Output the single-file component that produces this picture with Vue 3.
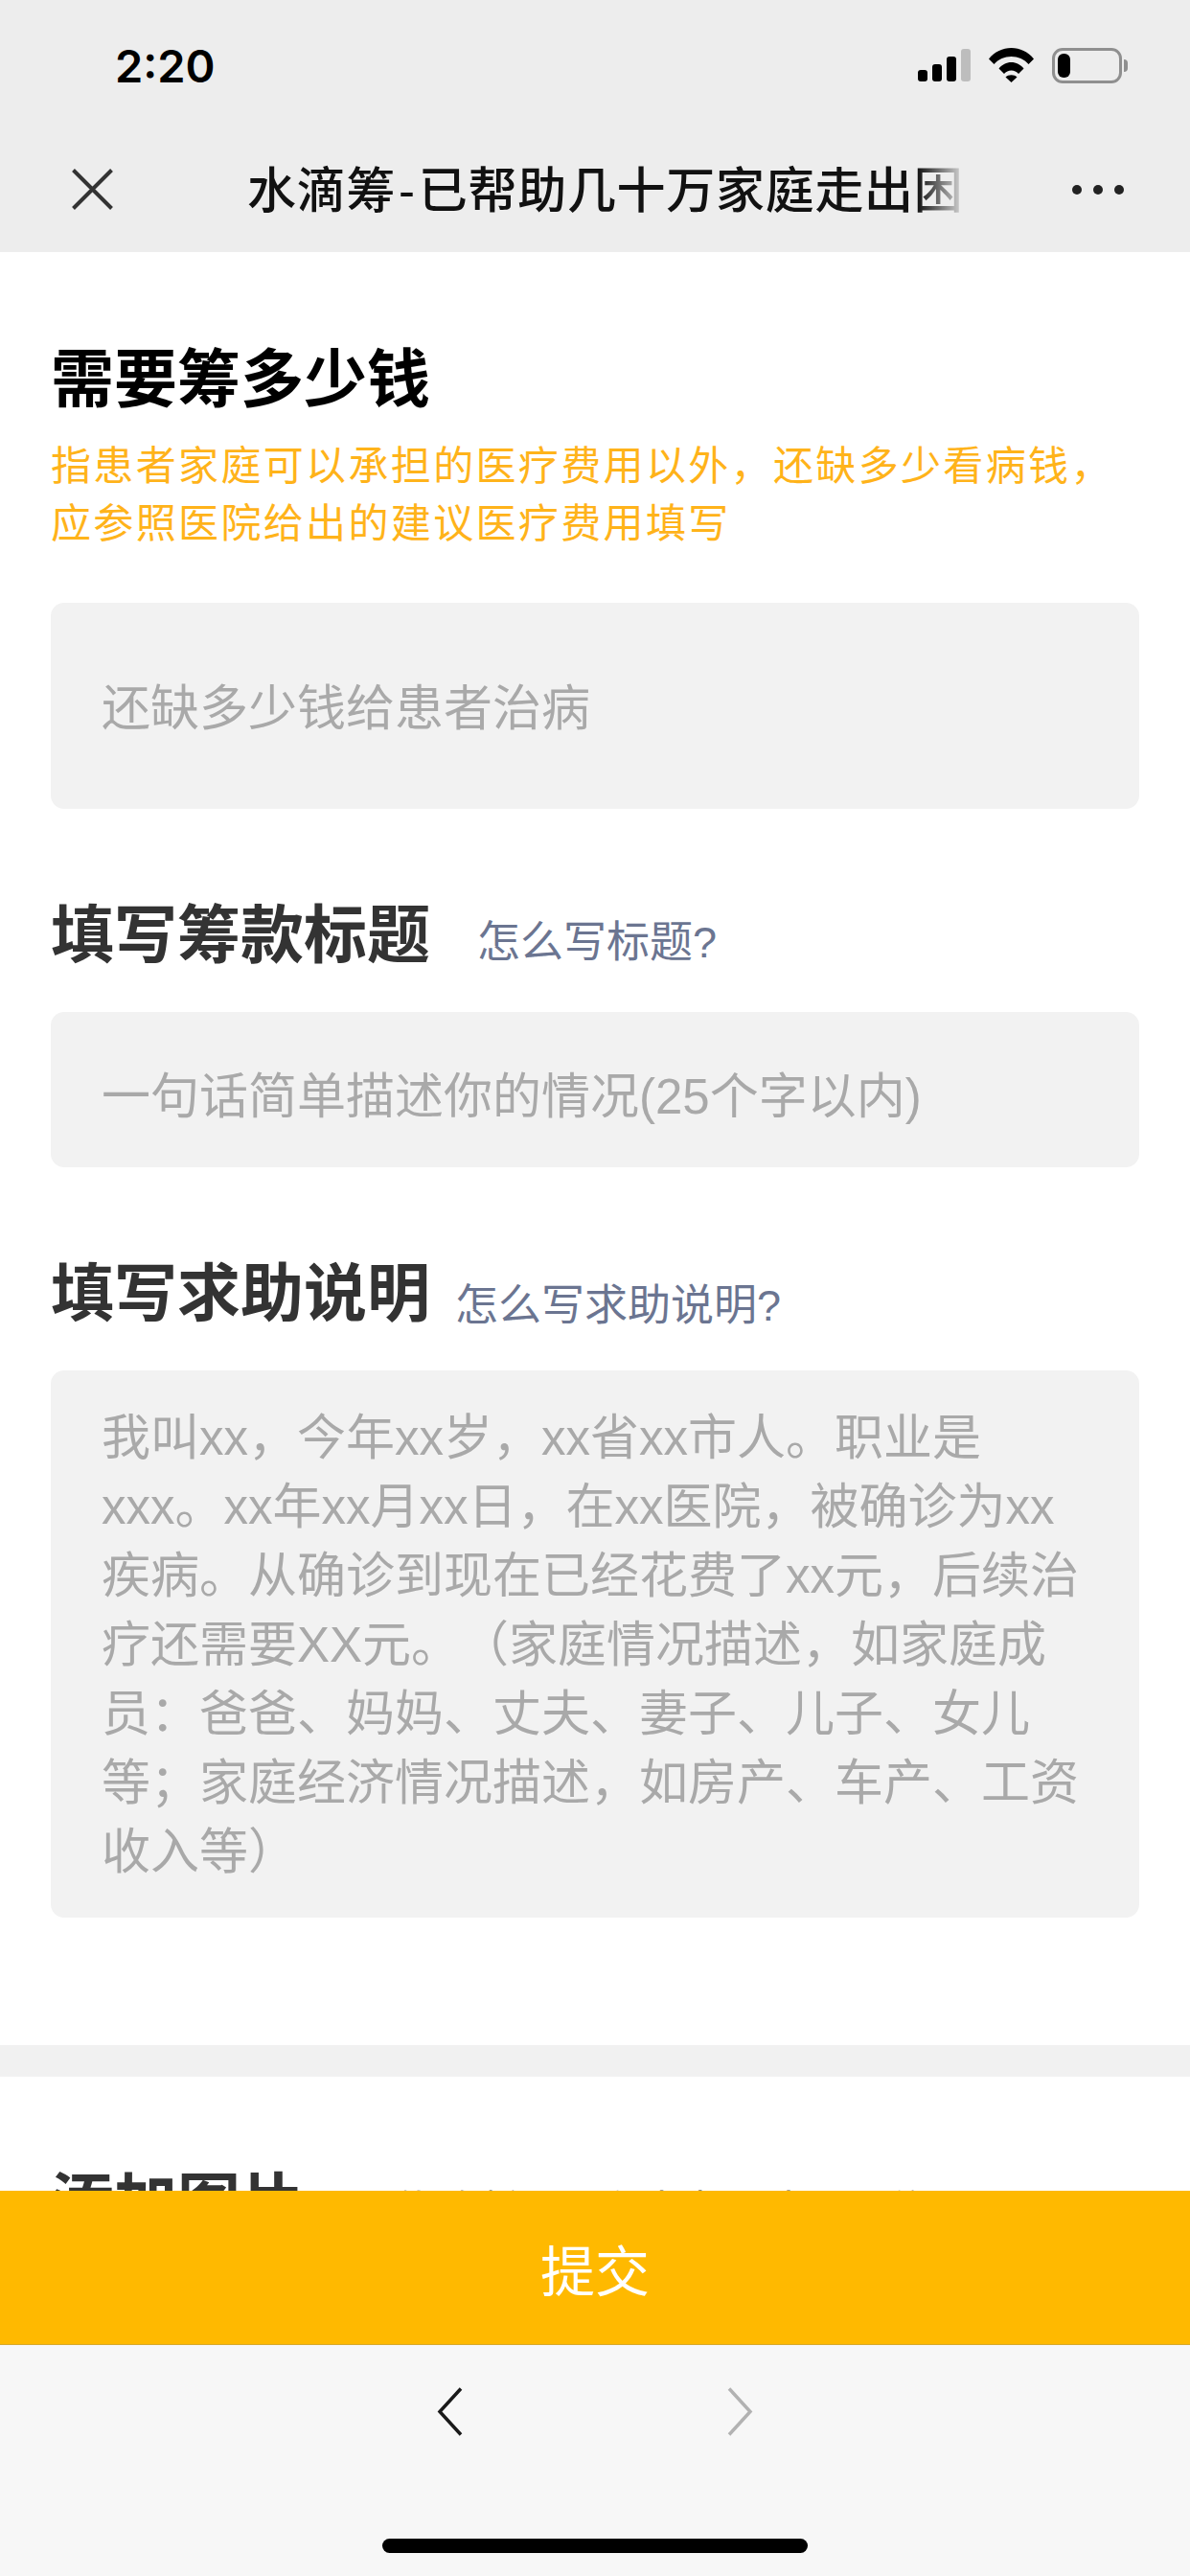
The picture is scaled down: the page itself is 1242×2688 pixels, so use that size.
<script setup>
const helpLines = [
  "我叫xx，今年xx岁，xx省xx市人。职业是",
  "xxx。xx年xx月xx日，在xx医院，被确诊为xx",
  "疾病。从确诊到现在已经花费了xx元，后续治",
  "疗还需要XX元。（家庭情况描述，如家庭成",
  "员：爸爸、妈妈、丈夫、妻子、儿子、女儿",
  "等；家庭经济情况描述，如房产、车产、工资",
  "收入等）",
];
</script>

<template>
  <div class="page">
    <header class="top">
      <div class="status">
        <span class="time">2:20</span>
        <div class="status-icons">
          <div class="signal">
            <i class="bar b1"></i>
            <i class="bar b2"></i>
            <i class="bar b3"></i>
            <i class="bar b4"></i>
          </div>
          <svg class="wifi" width="47" height="36" viewBox="0 0 47 36">
            <path d="M0 11.500C6 4 14.500 0 23.500 0S41 4 47 11.500L41.500 17C37 11.800 30.500 9 23.500 9S10 11.800 5.500 17Z" />
            <path d="M10.500 21.500C13.800 17.500 18.500 15 23.500 15S33.200 17.500 36.500 21.500L31 27C29 24.700 26.500 23.500 23.500 23.500S18 24.700 16 27Z" />
            <path d="M17.500 30.500C19 29 21 28.200 23.500 28.200S28 29 29.500 30.500L23.500 36Z" />
          </svg>
          <div class="battery">
            <div class="battery-body"><i class="battery-level"></i></div>
            <i class="battery-nub"></i>
          </div>
        </div>
      </div>
      <nav class="nav">
        <svg class="close" width="43" height="43" viewBox="0 0 43 43">
          <path d="M1.500 1.500L41.500 41.500M41.500 1.500L1.500 41.500" />
        </svg>
        <div class="nav-title">水滴筹<span class="nav-dash">-</span>已帮助几十万家庭走出困</div>
        <div class="dots"><i></i><i></i><i></i></div>
      </nav>
    </header>

    <main class="content">
      <section class="form">
        <h2 class="heading heading-first">需要筹多少钱</h2>
        <p class="hint">指患者家庭可以承担的医疗费用以外，还缺多少看病钱，<br />应参照医院给出的建议医疗费用填写</p>
        <div class="field field-amount">还缺多少钱给患者治病</div>

        <div class="heading-row">
          <h2 class="heading">填写筹款标题</h2>
          <a class="link link-title">怎么写标题?</a>
        </div>
        <div class="field field-title">一句话简单描述你的情况(25个字以内)</div>

        <div class="heading-row">
          <h2 class="heading">填写求助说明</h2>
          <a class="link link-help">怎么写求助说明?</a>
        </div>
        <div class="field field-help">
          <div v-for="line in helpLines" :key="line">{{ line }}</div>
        </div>
      </section>

      <div class="divider"></div>

      <section class="form">
        <div class="heading-row">
          <h2 class="heading">添加图片</h2>
          <span class="photo-note">上传诊断证明和患者照片更可信</span>
        </div>
      </section>
    </main>

    <button type="button" class="submit">提交</button>

    <footer class="toolbar">
      <div class="arrows">
        <svg width="27" height="51" viewBox="0 0 27 51">
          <path class="arrow-back" d="M25 1.500L3 25.500L25 49.500" />
        </svg>
        <svg width="27" height="51" viewBox="0 0 27 51">
          <path class="arrow-next" d="M2 1.500L24 25.500L2 49.500" />
        </svg>
      </div>
      <div class="home-bar"></div>
    </footer>
  </div>
</template>

<style>
html,
body {
  margin: 0;
  background: #fff;
}
</style>

<style scoped>
.page {
  width: 1242px;
  height: 2688px;
  display: flex;
  flex-direction: column;
  overflow: hidden;
  background: #fff;
  font-family: "Liberation Sans", "Noto Sans CJK SC", sans-serif;
  text-spacing-trim: space-all;
}

/* ---- status + nav ---- */

.top {
  flex-shrink: 0;
  height: 263px;
  background: #ededed;
}

.status {
  height: 136px;
  display: flex;
  align-items: center;
  justify-content: space-between;
  padding: 0 65px 0 120px;
}

.time {
  font-family: Inter, sans-serif;
  font-size: 47px;
  font-weight: 600;
  color: #000;
}

.status-icons {
  display: flex;
  align-items: center;
}

.signal {
  display: flex;
  align-items: flex-end;
  gap: 5px;
  height: 34px;
}

.bar {
  width: 10px;
  border-radius: 3px;
  background: #000;
}

.b1 { height: 12px; }
.b2 { height: 18px; }
.b3 { height: 26px; }
.b4 { height: 34px; background: #bdbdbd; }

.wifi {
  margin-left: 19px;
  fill: #000;
}

.battery {
  display: flex;
  align-items: center;
  margin-left: 19px;
}

.battery-body {
  box-sizing: border-box;
  width: 73px;
  height: 37px;
  padding: 3px;
  border: 3px solid #8f8f8f;
  border-radius: 11px;
}

.battery-level {
  display: block;
  width: 13px;
  height: 25px;
  border-radius: 6px;
  background: #000;
}

.battery-nub {
  width: 4px;
  height: 13px;
  margin-left: 2px;
  border-radius: 0 4px 4px 0;
  background: #8f8f8f;
}

.nav {
  height: 127px;
  display: flex;
  align-items: center;
  padding: 0 69px 0 75px;
}

.close {
  flex-shrink: 0;
  margin-bottom: 4px;
  fill: none;
  stroke: #333;
  stroke-width: 4;
}

.nav-title {
  width: 752px;
  margin-left: 140px;
  overflow: hidden;
  white-space: nowrap;
  font-size: 51px;
  font-weight: 500;
  line-height: 70px;
  letter-spacing: 0.7px;
  color: #111;
  -webkit-mask-image: linear-gradient(to right, #000 93%, transparent 100%);
  mask-image: linear-gradient(to right, #000 93%, transparent 100%);
}

.nav-dash {
  margin: 0 3px;
}

.dots {
  display: flex;
  gap: 12px;
  margin-left: auto;
  margin-bottom: 4px;
}

.dots i {
  width: 10px;
  height: 10px;
  border-radius: 50%;
  background: #222;
}

/* ---- form ---- */

.content {
  flex: 1;
  min-height: 0;
  overflow: hidden;
}

.form {
  padding: 0 53px;
}

.heading {
  margin: 0;
  font-size: 66px;
  font-weight: 700;
  line-height: 92px;
  color: #333;
}

.heading-first {
  margin-top: 87px;
  color: #000;
}

.heading-row {
  display: flex;
  align-items: flex-start;
  margin-top: 86px;
}

.hint {
  margin: 15px 0 0;
  font-size: 42px;
  line-height: 60px;
  letter-spacing: 2.35px;
  color: #ffb31a;
}

.link {
  font-size: 45px;
  line-height: 60px;
  color: #6b7591;
}

.link-title {
  margin: 24px 0 0 49px;
}

.link-help {
  margin: 29px 0 0 26px;
}

.field {
  box-sizing: border-box;
  padding: 0 53px;
  border-radius: 14px;
  background: #f2f2f2;
  font-size: 51px;
  color: #a9a9a9;
  white-space: nowrap;
}

.field-amount {
  height: 215px;
  margin-top: 52px;
  padding-top: 3px;
  line-height: 215px;
}

.field-title {
  height: 162px;
  margin-top: 34px;
  padding-top: 8px;
  line-height: 162px;
}

.field-help {
  height: 571px;
  margin-top: 34px;
  padding-top: 35px;
  line-height: 72px;
}

.divider {
  height: 33px;
  margin-top: 133px;
  background: #f1f1f1;
}

.photo-note {
  margin: 24px 0 0 51px;
  font-size: 43px;
  line-height: 60px;
  color: #888;
}

/* ---- bottom ---- */

.submit {
  flex-shrink: 0;
  display: block;
  width: 100%;
  height: 161px;
  padding: 0;
  border: none;
  border-bottom: 1px solid #d6a92f;
  background: #ffb900;
  font: inherit;
  font-size: 57px;
  color: #fff;
}

.toolbar {
  flex-shrink: 0;
  height: 241px;
  box-sizing: border-box;
  display: flex;
  flex-direction: column;
  align-items: center;
  padding-top: 44px;
  background: #f7f7f7;
}

.arrows {
  display: flex;
  gap: 276px;
}

.arrows path {
  fill: none;
  stroke-width: 3.500;
}

.arrow-back {
  stroke: #1a1a1a;
}

.arrow-next {
  stroke: #b2b2b2;
}

.home-bar {
  width: 444px;
  height: 15px;
  margin-top: 107px;
  border-radius: 8px;
  background: #000;
}
</style>
